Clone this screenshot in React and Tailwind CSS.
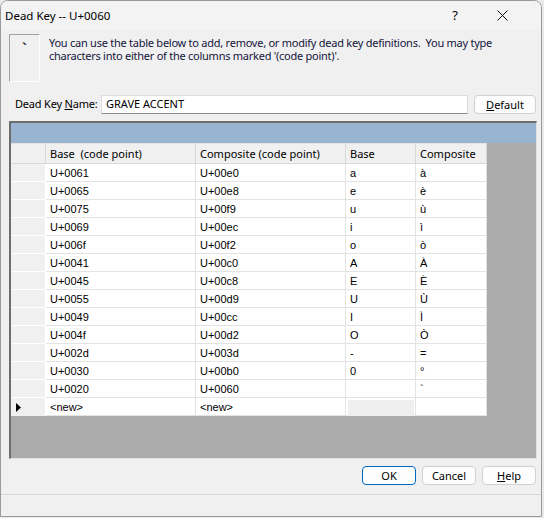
import React from 'react';

const rows = [
  ['U+0061', 'U+00e0', 'a', 'à'],
  ['U+0065', 'U+00e8', 'e', 'è'],
  ['U+0075', 'U+00f9', 'u', 'ù'],
  ['U+0069', 'U+00ec', 'i', 'ì'],
  ['U+006f', 'U+00f2', 'o', 'ò'],
  ['U+0041', 'U+00c0', 'A', 'À'],
  ['U+0045', 'U+00c8', 'E', 'È'],
  ['U+0055', 'U+00d9', 'U', 'Ù'],
  ['U+0049', 'U+00cc', 'I', 'Ì'],
  ['U+004f', 'U+00d2', 'O', 'Ò'],
  ['U+002d', 'U+003d', '-', '='],
  ['U+0030', 'U+00b0', '0', '°'],
  ['U+0020', 'U+0060', '', '`'],
];

const ui = { fontFamily: '"Noto Sans", "Open Sans", sans-serif' };
const cellFont = { fontFamily: '"Liberation Sans", Arial, sans-serif' };

const Btn = ({ children, primary, className = '' }) => (
  <button
    className={`h-[19px] rounded-[4px] border bg-[#fdfdfd] text-[11px] leading-none text-black flex items-center justify-center ${primary ? 'border-[#0067c0] border-[1.5px]' : 'border-[#d0d0d0]'} ${className}`}
  >
    {children}
  </button>
);

const Cell = ({ children, className = '' }) => (
  <div className={`h-[18px] border-r border-b border-[#e3e3e3] bg-white pl-[4px] text-[11px] leading-[18px] text-black ${className}`} style={cellFont}>
    {children}
  </div>
);

export default function App() {
  return (
    <div className="w-[544px] h-[518px] bg-[#e9e9e9] overflow-hidden" style={ui}>
      <div className="w-[542px] h-[517px] bg-[#f0f0f0] border border-[#9a9a9a] rounded-t-[8px] flex flex-col overflow-hidden">
        {/* title bar */}
        <div className="h-[29px] bg-[#f3f3f3] flex items-center pl-[4px] text-[11.5px] text-black">
          <span>Dead Key -- U+0060</span>
          <span className="ml-auto mr-[39px] text-[13px]">?</span>
          <svg width="11" height="11" viewBox="0 0 11 11" className="mr-[33px]">
            <path d="M0.5 0.5 L10.5 10.5 M10.5 0.5 L0.5 10.5" stroke="#111" strokeWidth="1" />
          </svg>
        </div>

        {/* description */}
        <div className="flex pl-[8px] pt-[4px] h-[58px]">
          <div className="w-[31px] h-[48px] shrink-0 border-t border-l border-[#a0a0a0] border-r border-b border-r-white border-b-white flex justify-center pt-[6px]">
            <span className="text-[15px] font-bold leading-none text-[#222]" style={cellFont}>`</span>
          </div>
          <div className="ml-[9px] pt-[2px] text-[11px] leading-[13px] text-[#14143c] whitespace-nowrap tracking-[-0.25px]">
            <div>You can use the table below to add, remove, or modify dead key definitions.&nbsp; You may type</div>
            <div>characters into either of the columns marked '(code point)'.</div>
          </div>
        </div>

        {/* name row */}
        <div className="flex items-center h-[19px] mt-[7px] pl-[14px] text-[11px] text-black">
          <span className="w-[86px] shrink-0 whitespace-nowrap tracking-[-0.2px]">Dead Key <u>N</u>ame:</span>
          <div className="w-[367px] h-[19px] bg-white border border-[#dcdcdc] border-b-[#8a8a8a] flex items-center pl-[4px] text-[11px]">GRAVE ACCENT</div>
          <Btn className="w-[62px] ml-[6px]"><u>D</u>efault</Btn>
        </div>

        {/* data grid */}
        <div className="ml-[8px] mt-[7px] w-[528px] h-[338px] border-t-2 border-l-2 border-t-[#6d6d6d] border-l-[#6d6d6d] border-r border-b border-r-[#e0e0e0] border-b-[#e0e0e0] bg-[#ababab] flex flex-col">
          <div className="h-[20px] bg-[#99b4d1] shrink-0" />
          <div className="grid grid-cols-[35px_150px_150px_70px_71px] w-[476px] border-t border-[#e3e3e3]">
            <div className="h-[20px] bg-[#f0f0f0] border-r border-b border-[#d8d8d8]" />
            {['Base  (code point)', 'Composite (code point)', 'Base', 'Composite'].map((h) => (
              <div key={h} className="h-[20px] bg-[#f0f0f0] border-r border-b border-[#d8d8d8] pl-[4px] text-[11px] leading-[19px] text-black whitespace-pre">
                {h}
              </div>
            ))}
            {rows.map((r, i) => (
              <React.Fragment key={i}>
                <div className="h-[18px] bg-[#f0f0f0] border-r border-b border-[#ffffff]" />
                {r.map((c, j) => (
                  <Cell key={j}>{c}</Cell>
                ))}
              </React.Fragment>
            ))}
            <div className="h-[18px] bg-[#f0f0f0] border-r border-[#ffffff] flex items-center pl-[5px]">
              <svg width="5" height="9" viewBox="0 0 5 9"><path d="M0 0 L5 4.5 L0 9 Z" fill="#000" /></svg>
            </div>
            <Cell>&lt;new&gt;</Cell>
            <Cell>&lt;new&gt;</Cell>
            <div className="h-[18px] border-r border-b border-[#e3e3e3] bg-white pt-[2px] pl-[2px]">
              <div className="w-[66px] h-[16px] bg-[#efefef]" />
            </div>
            <Cell />
          </div>
        </div>

        {/* buttons */}
        <div className="flex justify-end gap-[6px] pr-[5px] mt-[7px]">
          <Btn primary className="w-[54px]">OK</Btn>
          <Btn className="w-[54px]">Cancel</Btn>
          <Btn className="w-[54px]"><u>H</u>elp</Btn>
        </div>

        {/* status strip */}
        <div className="mt-auto h-[22px] border-t border-[#d7d7d7]" />
      </div>
    </div>
  );
}
